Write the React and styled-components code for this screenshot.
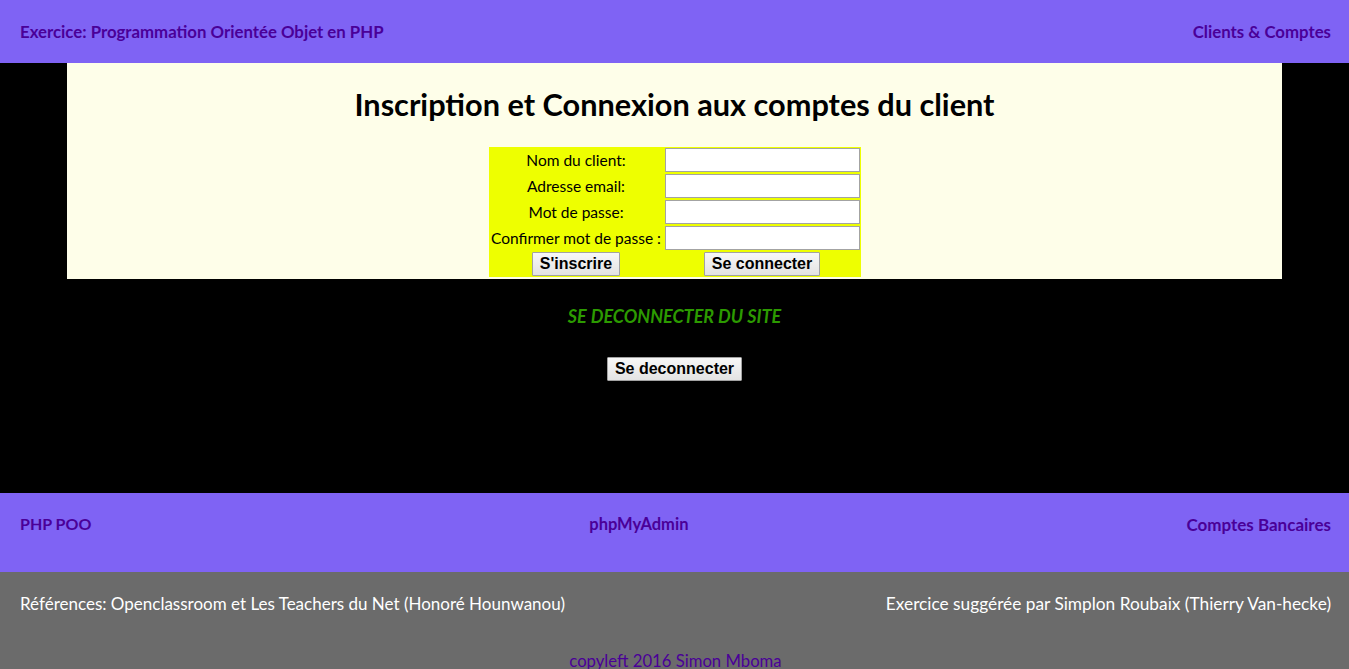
import React from 'react';
import styled, { createGlobalStyle } from 'styled-components';

const GlobalStyle = createGlobalStyle`
    body {
        margin: 0;
        background: #000;
        font-family: Lato, "Liberation Sans", sans-serif;
    }
`;

const Bar = styled.nav`
    display: flex;
    justify-content: space-between;
    align-items: ${(props) => (props.top ? 'center' : 'flex-start')};
    background: #7f63f4;
    height: ${(props) => props.height}px;
    padding: ${(props) => (props.top ? '0' : '21px')} 18px 0 20px;
    box-sizing: border-box;
`;

const NavLink = styled.a`
    color: #4a0098;
    font-weight: 700;
    font-size: ${(props) => props.size || 16.8}px;
    text-decoration: none;
`;

const Main = styled.main`
    height: 430px;
    background: #000;
`;

const Panel = styled.section`
    width: 1215px;
    margin: 0 auto;
    background: #fefee9;
    padding: 23px 0 1px;
    display: flex;
    flex-direction: column;
    align-items: center;
`;

const Title = styled.h1`
    margin: 0 0 23px;
    font-size: 30.7px;
    font-weight: 700;
    color: #000;
    line-height: 38px;
`;

const Form = styled.form`
    display: grid;
    grid-template-columns: 173px 195px;
    gap: 2px;
    padding: 1px;
    background: #eeff00;
    margin-bottom: 1px;
`;

const Label = styled.label`
    font-size: 15.5px;
    color: #000;
    text-align: center;
    line-height: 24px;
    white-space: nowrap;
`;

const Input = styled.input`
    width: 195px;
    height: 24px;
    box-sizing: border-box;
    border: 1px solid #a3a3a3;
    background: #fff;
    margin: 0;
`;

const Cell = styled.div`
    display: flex;
    justify-content: center;
`;

const Button = styled.button`
    font-family: "Liberation Sans", Arial, sans-serif;
    font-weight: 700;
    font-size: 16px;
    color: #000;
    height: 24px;
    padding: 0 7px;
    background: linear-gradient(#f7f7f7, #e3e3e3);
    border: 1px solid #a2a2a2;
    border-radius: 1px;
`;

const Logout = styled.div`
    display: flex;
    flex-direction: column;
    align-items: center;
    padding-top: 26px;
`;

const LogoutTitle = styled.h3`
    margin: 0 0 30px;
    color: #2c9a00;
    font-size: 18px;
    font-style: italic;
    font-weight: 700;
    line-height: 22px;
`;

const Footer = styled.footer`
    background: #6b6b6b;
    height: 97px;
    padding: 21px 18px 0 20px;
    box-sizing: border-box;
`;

const FooterRow = styled.div`
    display: flex;
    justify-content: space-between;
    color: #fff;
    line-height: 21px;
`;

const FooterText = styled.span`
    font-size: ${(props) => props.size}px;
`;

const Copy = styled.p`
    margin: 37px 0 0;
    text-align: center;
    color: #4a0098;
    font-size: 16.7px;
    line-height: 21px;
`;

const fields = [
    ['Nom du client:', 'text'],
    ['Adresse email:', 'email'],
    ['Mot de passe:', 'password'],
    ['Confirmer mot de passe :', 'password'],
];

export default function App() {
    return (
        <>
            <GlobalStyle />
            <Bar top height={63}>
                <NavLink href="#">Exercice: Programmation Orientée Objet en PHP</NavLink>
                <NavLink href="#">Clients &amp; Comptes</NavLink>
            </Bar>
            <Main>
                <Panel>
                    <Title>Inscription et Connexion aux comptes du client</Title>
                    <Form>
                        {fields.map(([label, type]) => (
                            <React.Fragment key={label}>
                                <Label>{label}</Label>
                                <Input type={type} />
                            </React.Fragment>
                        ))}
                        <Cell>
                            <Button type="button">S'inscrire</Button>
                        </Cell>
                        <Cell>
                            <Button type="button">Se connecter</Button>
                        </Cell>
                    </Form>
                </Panel>
                <Logout>
                    <LogoutTitle>SE DECONNECTER DU SITE</LogoutTitle>
                    <Button type="button">Se deconnecter</Button>
                </Logout>
            </Main>
            <Bar height={79}>
                <NavLink href="#" size={16}>PHP POO</NavLink>
                <NavLink href="#" size={16.5}>phpMyAdmin</NavLink>
                <NavLink href="#" size={17}>Comptes Bancaires</NavLink>
            </Bar>
            <Footer>
                <FooterRow>
                    <FooterText size={17}>
                        Références: Openclassroom et Les Teachers du Net (Honoré Hounwanou)
                    </FooterText>
                    <FooterText size={17.3}>
                        Exercice suggérée par Simplon Roubaix (Thierry Van-hecke)
                    </FooterText>
                </FooterRow>
                <Copy>copyleft 2016 Simon Mboma</Copy>
            </Footer>
        </>
    );
}
